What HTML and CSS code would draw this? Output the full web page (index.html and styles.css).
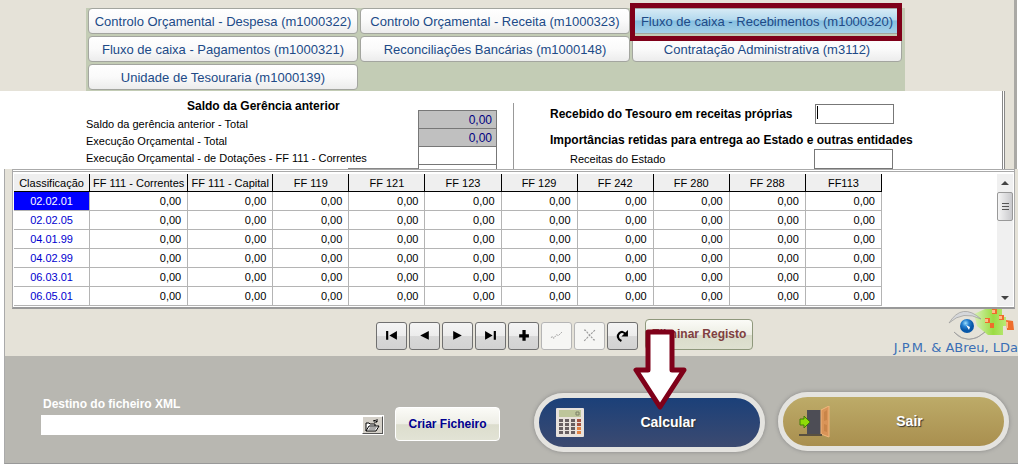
FILE: index.html
```html
<!DOCTYPE html>
<html lang="pt">
<head>
<meta charset="utf-8">
<title>Fluxo de caixa - Recebimentos</title>
<link rel="stylesheet" href="styles.css">
</head>
<body>
<header class="top">
  <nav class="menu">
    <button class="menu-btn">Controlo Orçamental - Despesa (m1000322)</button>
    <button class="menu-btn">Controlo Orçamental - Receita (m1000323)</button>
    <div class="marked"><button class="menu-btn active">Fluxo de caixa - Recebimentos (m1000320)</button></div>
    <button class="menu-btn">Fluxo de caixa - Pagamentos (m1000321)</button>
    <button class="menu-btn">Reconciliações Bancárias (m1000148)</button>
    <button class="menu-btn">Contratação Administrativa (m3112)</button>
    <button class="menu-btn">Unidade de Tesouraria (m1000139)</button>
  </nav>
</header>

<section class="summary">
  <div class="labels">
    <h2 class="heading balance-title">Saldo da Gerência anterior</h2>
    <label for="s1">Saldo da gerência anterior - Total</label>
    <label for="s2">Execução Orçamental - Total</label>
    <label for="s3">Execução Orçamental - de Dotações - FF 111 - Correntes</label>
    <span class="rule"></span>
  </div>
  <div class="fields">
    <input id="s1" class="amount total" value="0,00" readonly>
    <input id="s2" class="amount total" value="0,00" readonly>
    <input id="s3" class="amount">
    <input class="amount" aria-label="Execução Orçamental">
  </div>
  <div class="treasury">
    <div class="line"><label class="heading" for="t1">Recebido do Tesouro em receitas próprias</label><span class="caret-box"><input id="t1" class="box"></span></div>
    <h2 class="heading">Importâncias retidas para entrega ao Estado e outras entidades</h2>
    <div class="line state"><label for="t2">Receitas do Estado</label><input id="t2" class="box"></div>
  </div>
</section>

<main class="frame">
  <div class="grid-box">
    <div class="grid-scroll">
    <table class="grid">
      <colgroup><col class="c-class"><col class="c-cor"><col class="c-cap"><col class="c-ff" span="8"></colgroup>
      <thead><tr><th>Classificação</th><th>FF 111 - Correntes</th><th>FF 111 - Capital</th><th>FF 119</th><th>FF 121</th><th>FF 123</th><th>FF 129</th><th>FF 242</th><th>FF 280</th><th>FF 288</th><th>FF113</th></tr></thead>
      <tbody>
        <tr><td class="selected">02.02.01</td><td>0,00</td><td>0,00</td><td>0,00</td><td>0,00</td><td>0,00</td><td>0,00</td><td>0,00</td><td>0,00</td><td>0,00</td><td>0,00</td></tr>
        <tr><td>02.02.05</td><td>0,00</td><td>0,00</td><td>0,00</td><td>0,00</td><td>0,00</td><td>0,00</td><td>0,00</td><td>0,00</td><td>0,00</td><td>0,00</td></tr>
        <tr><td>04.01.99</td><td>0,00</td><td>0,00</td><td>0,00</td><td>0,00</td><td>0,00</td><td>0,00</td><td>0,00</td><td>0,00</td><td>0,00</td><td>0,00</td></tr>
        <tr><td>04.02.99</td><td>0,00</td><td>0,00</td><td>0,00</td><td>0,00</td><td>0,00</td><td>0,00</td><td>0,00</td><td>0,00</td><td>0,00</td><td>0,00</td></tr>
        <tr><td>06.03.01</td><td>0,00</td><td>0,00</td><td>0,00</td><td>0,00</td><td>0,00</td><td>0,00</td><td>0,00</td><td>0,00</td><td>0,00</td><td>0,00</td></tr>
        <tr><td>06.05.01</td><td>0,00</td><td>0,00</td><td>0,00</td><td>0,00</td><td>0,00</td><td>0,00</td><td>0,00</td><td>0,00</td><td>0,00</td><td>0,00</td></tr>
      </tbody>
    </table>
    </div>
    <div class="scrollbar">
      <button class="scroll-arrow" aria-label="Subir"><svg width="8" height="5" viewBox="0 0 8 5"><path d="M4 0 8 4H0z" fill="#444"/></svg></button>
      <div class="thumb"><svg width="7" height="8" viewBox="0 0 7 8"><path d="M0 .5h7M0 3.5h7M0 6.5h7" stroke="#555"/></svg></div>
      <button class="scroll-arrow last" aria-label="Descer"><svg width="8" height="5" viewBox="0 0 8 5"><path d="M0 1h8L4 5z" fill="#444"/></svg></button>
    </div>
  </div>

  <div class="toolbar">
    <button class="nav-btn" aria-label="Primeiro"><svg viewBox="0 0 12 10"><path d="M1 1h2v8H1zM11 1v8L4 5z"/></svg></button>
    <button class="nav-btn" aria-label="Anterior"><svg viewBox="0 0 12 10"><path d="M10 1v8L2 5z"/></svg></button>
    <button class="nav-btn" aria-label="Seguinte"><svg viewBox="0 0 12 10"><path d="M2 1v8l8-4z"/></svg></button>
    <button class="nav-btn" aria-label="Último"><svg viewBox="0 0 12 10"><path d="M1 1v8l7-4zM9 1h2v8H9z"/></svg></button>
    <button class="nav-btn" aria-label="Inserir"><svg viewBox="0 0 12 10"><path d="M5 0h3v4h3v3H8v3H5V7H2V4h3z"/></svg></button>
    <button class="nav-btn" disabled aria-label="Confirmar"><svg viewBox="0 0 14 10"><path d="M1 7l2-1 1 2 3-4 2 1 4-4" fill="none" stroke="#999" stroke-dasharray="2 1"/></svg></button>
    <button class="nav-btn" disabled aria-label="Cancelar"><svg viewBox="0 0 12 12"><path d="M1 1h1l8 9h1M11 1L9 3 3 9l-2 2" fill="none" stroke="#999" stroke-dasharray="2 1"/></svg></button>
    <button class="nav-btn" aria-label="Atualizar"><svg viewBox="0 0 12 12"><path d="M5 11C1 9 1 6 3 4q3-3 6 1" fill="none" stroke="#000" stroke-width="2"/><path d="M11 1v6H5z"/></svg></button>
    <button class="delete-btn">Eliminar Registo</button>
    <div class="logo">
      <svg width="70" height="33" viewBox="0 0 70 33" aria-hidden="true">
        <defs>
          <radialGradient id="iris" cx="40%" cy="30%"><stop offset="0" stop-color="#9de0ff"/><stop offset=".5" stop-color="#2580d0"/><stop offset="1" stop-color="#0757a8"/></radialGradient>
          <linearGradient id="leaf"><stop offset="0" stop-color="#d9f0b8"/><stop offset=".6" stop-color="#9bdc42"/><stop offset="1" stop-color="#b9e976"/></linearGradient>
        </defs>
        <path d="M26 5 37 0h17v8h4v9h-3v9H40L29 17z" fill="url(#leaf)"/>
        <path d="M44 0h5v5h-5zM51 6h5v5h-5zM37 9h5v5h-5zM42 14h4v5h-4zM58 11l7 1 1 9h-7z" fill="#ee6d2c"/>
        <path d="M44 1h3v3h-3zM51 7h3v3h-3zM37 10h3v3h-3zM58 13h2v6h-1z" fill="#ffbc86"/>
        <path d="M1 14Q14-7 33 10 15 1 1 14z" fill="#d5d7da" stroke="#999" stroke-width=".7"/>
        <path d="M6 23q15 15 31 0-11 10-23 6-5-2-8-6z" fill="#d0d3d7" stroke="#999" stroke-width=".7"/>
        <circle cx="19" cy="17" r="7" fill="url(#iris)"/><path d="m18 16 3 5 1-3z" fill="#fff"/>
      </svg>
      <span class="logo-text">J.P.M. &amp; ABreu, LDa</span>
    </div>
  </div>

  <footer class="actions">
    <div class="destination">
      <label for="xml">Destino do ficheiro XML</label>
      <div class="file">
        <input id="xml">
        <button class="browse" aria-label="Procurar"><svg width="15" height="13" viewBox="0 0 15 13"><path d="M1 12V4h3l1 1h5v2M1 12l3-5h10l-3 5zM8 2q3-2 4 1M12 0v3H9" fill="#fff" stroke="#000"/><path d="M5 8h7l-2 3H3z" fill="#aaa"/></svg></button>
      </div>
    </div>
    <button class="create">Criar Ficheiro</button>
    <button class="pill calc">
      <svg width="28" height="29" viewBox="0 0 28 29" aria-hidden="true"><rect width="28" height="29" rx="1" fill="#e8e2dc"/><rect x="3" y="2" width="22" height="7" fill="#bdc59a"/><path d="M20 4h3v3h-3z" fill="none" stroke="#7c8068"/><g fill="#685f61"><path d="M3 11h4v3H3zM9 11h4v3H9zM15 11h4v3h-4zM3 15h4v3H3zM9 15h4v3H9zM15 15h4v3h-4zM3 19h4v3H3zM9 19h4v3H9zM15 19h4v3h-4zM3 23h4v3H3zM9 23h4v3H9zM15 23h4v3h-4z"/></g><path d="M21 11h4v3h-4zM21 15h4v3h-4z" fill="#a45342"/><path d="M21 19h4v3h-4zM21 23h4v3h-4z" fill="#e28243"/></svg>
      <span>Calcular</span>
      <svg class="pointer" width="56" height="83" viewBox="0 0 56 83" aria-hidden="true"><path d="M16 4h24v38h12L28 79 4 42h12z" fill="#fff" stroke="#7f0019" stroke-width="5" stroke-linejoin="round"/></svg>
    </button>
    <button class="pill exit">
      <svg width="32" height="32" viewBox="0 0 32 32" aria-hidden="true"><path d="M8 4h16v25H8z" fill="#4d4d55"/><path d="M22 4l8-4v31l-8-3z" fill="#d99458" stroke="#f0b67d"/><path d="M25 6l3-2v10l-3 1zM25 18l3 1v7l-3-1z" fill="#c98549"/><path d="M0 28h23v2H0z" fill="#5a5140"/><path d="M1 13h4V10l6 6-6 6v-3H1z" fill="#8fdc08" stroke="#417c08"/></svg>
      <span>Sair</span>
    </button>
  </footer>
</main>
</body>
</html>
```
FILE: styles.css
```css
* { box-sizing: border-box; }
body { margin: 0; background: #fff; color: #000; font: 11px/17px "Liberation Sans", Arial, sans-serif; overflow: hidden; }
button, input { font: inherit; margin: 0; padding: 0; border-radius: 0; }
h2 { margin: 0; }

.top { display: flex; margin-right: 1px; padding: 8px 109px 0 86px; background: #e5e2d8; border-right: 3px solid #aaa9a5; }
.menu { flex: 1; display: grid; grid-template-columns: repeat(3, 1fr); gap: 2px; padding: 0 3px 1px 2px; background: #c3ccb5; }
.menu-btn { width: 100%; height: 26px; border: 1px solid #a3a59f; border-radius: 4px; background: linear-gradient(#fff, #fafafa 50%, #ececec); color: #204a87; font-size: 13px; white-space: nowrap; }
.menu-btn.active { background: linear-gradient(#d6eaf5, #b4d9ee 45%, #86bfe0 50%, #a4d0e8); }
.marked { position: relative; }
.marked::after { content: ""; position: absolute; inset: -5px 0 -7px -2px; border: 5px solid #7f0019; pointer-events: none; }

.summary { display: flex; height: 78px; margin-right: 1px; background: #fff; border-right: 3px solid #aaa9a5; overflow: hidden; }
.summary::after { content: ""; width: 9px; background: #e5e2d8; }
.heading { font-size: 12px; font-weight: bold; line-height: 17px; }
.labels { display: flex; flex-direction: column; width: 418px; padding: 6px 0 0 86px; }
.labels label { line-height: 17px; }
.balance-title { padding-left: 101px; line-height: 19px; }
.rule { align-self: flex-end; width: 70px; margin-top: 1px; border-top: 1px solid #888; }
.fields { display: flex; flex-direction: column; width: 96px; margin-top: 12px; padding: 7px 16px 0 0; border-right: 1px solid #999; }
.amount { flex: none; width: 79px; height: 19px; margin-bottom: -1px; padding: 0 4px; border: 1px solid #777; text-align: right; color: #000080; font-size: 12px; }
.amount.total { background: #c0c0c0; }
.treasury { flex: 1; display: flex; flex-direction: column; padding: 13px 0 0 36px; border-right: 3px double #888; }
.line { display: flex; align-items: center; height: 20px; }
.line label { width: 265px; }
.treasury h2 { margin-top: 8px; }
.line.state { padding-left: 20px; }
.line.state label { width: 244px; }
.box { display: block; width: 79px; height: 20px; border: 1px solid #777; background: #fff; }
.caret-box { position: relative; }
.caret-box::after { content: ""; position: absolute; left: 2px; top: 2px; width: 1px; height: 13px; background: #000; }

.frame { margin-left: 4px; background: #e5e2d8; border-left: 1px solid #aaa; border-bottom: 1px solid #999; }
.grid-box { display: flex; margin: 0 3px 0 7px; padding: 2px 0 1px; border: 1px solid #aaa; border-bottom: 2px solid #999; border-top: 3px double #aaa; background: #fff; }
.grid-scroll { flex: 1; overflow: hidden; padding-left: 1px; }
.grid { width: 868px; table-layout: fixed; border-collapse: separate; border-spacing: 0; }
.c-class { width: 76px; }
.c-cor { width: 98px; }
.c-cap { width: 85px; }
.c-ff { width: 76px; }
.grid th { height: 18px; padding: 0; border-right: 1px solid #000; border-bottom: 1px solid #000; background: #efefef; font-weight: normal; line-height: 16px; white-space: nowrap; }
.grid td { height: 19px; padding: 0 6px 0 0; border-right: 1px solid #b4b4b4; border-bottom: 1px solid #b4b4b4; text-align: right; line-height: 17px; }
.grid td:first-child { padding: 0; text-align: center; color: #0000d0; }
.grid td.selected { background: #00f; color: #fff; }
.scrollbar { display: flex; flex-direction: column; width: 16px; margin-right: 1px; background: #f0f0f0; }
.scroll-arrow { display: flex; align-items: center; justify-content: center; height: 18px; border: 0; background: none; }
.scroll-arrow.last { margin-top: auto; }
.thumb { display: flex; align-items: center; justify-content: center; height: 29px; border: 1px solid #999; border-radius: 2px; background: linear-gradient(90deg, #f4f4f4, #c9c9cc); }

.toolbar { display: flex; align-items: center; height: 47px; padding-left: 371px; gap: 2px; }
.nav-btn { display: flex; align-items: center; justify-content: center; width: 31px; height: 28px; margin-top: 6px; border: 1px solid #707070; border-radius: 3px; background: linear-gradient(#f4f4f4, #ececec 50%, #d8d8d8 52%, #d2d2d2); }
.nav-btn svg { flex: none; width: 13px; }
.nav-btn:disabled { border-color: #b5b5b5; background: #f6f6f4; }
.delete-btn { width: 108px; height: 31px; margin: 4px 0 0 5px; border: 1px solid #8f987c; border-radius: 4px; background: linear-gradient(#fbfbf7, #edeee4 50%, #d9dbc9 52%, #dfe1d1); color: #804040; font-size: 12px; font-weight: bold; white-space: nowrap; }
.logo { display: flex; flex-direction: column; align-items: flex-end; align-self: stretch; margin-left: auto; }
.logo svg { flex: none; }
.logo-text { color: #3b6fb5; font: 13px/12px "DejaVu Sans", sans-serif; white-space: nowrap; }

.actions { display: flex; height: 107px; padding: 0 9px 0 36px; background: #b8b7b1; }
.destination { flex: 1; padding-top: 39px; }
.destination label { display: block; margin-left: 2px; color: #fff; font-size: 12px; font-weight: bold; line-height: 18px; }
.file { display: flex; height: 20px; margin-top: 2px; padding: 1px; background: #fff; }
.file input { flex: 1; min-width: 0; border: 0; background: #fff; outline: 0; }
.browse { display: flex; align-items: center; justify-content: center; width: 21px; border: 1px solid; border-color: #fff #555 #555 #fff; background: #d4d0c8; }
.create { width: 105px; height: 34px; margin: 51px 0 0 11px; border: 1px solid #fff; border-radius: 4px; background: linear-gradient(#fbfbf7, #eeeee6 50%, #dcddcd 52%, #e2e3d5); color: #000090; font-size: 12px; font-weight: bold; }
.pill { position: relative; display: flex; align-items: center; width: 231px; height: 59px; padding: 0 8px 0 17px; border: 5px solid #e4e3df; border-radius: 30px; color: #fff; font-size: 14px; font-weight: bold; text-shadow: 1px 1px 1px #333; box-shadow: 0 0 4px #888; }
.pill span { flex: 1; text-align: center; }
.calc { margin: 37px 0 0 34px; background: linear-gradient(#1b4079, #3c4a70); }
.exit { margin: 36px 0 0 13px; padding: 0 16px; background: linear-gradient(#bdab68, #a98f4f); }
.pointer { position: absolute; left: 93px; top: -70px; }
```
